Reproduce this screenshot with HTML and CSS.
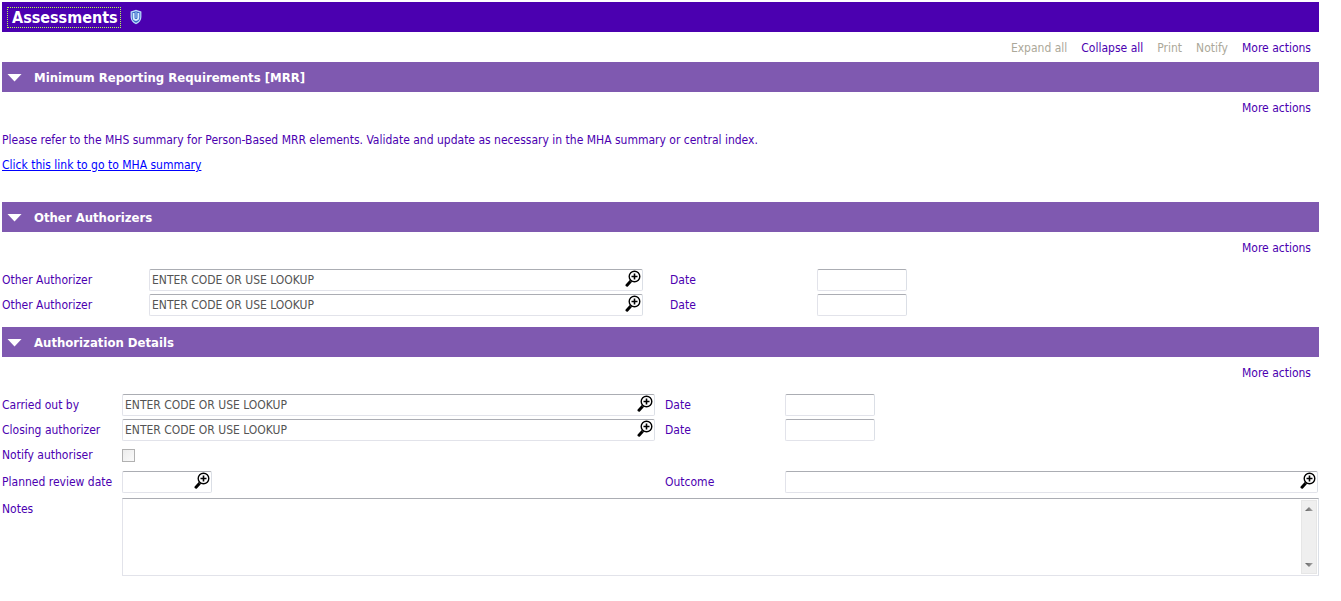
FILE: index.html
```html
<!DOCTYPE html>
<html lang="en">
<head>
<meta charset="utf-8">
<title>Assessments</title>
<link rel="stylesheet" href="styles.css">
</head>
<body>
<svg class="defs" aria-hidden="true">
  <symbol id="lookup" viewBox="0 0 16 18">
    <path d="M5.400 11.400 2 15.200" fill="none" stroke="#000" stroke-width="3" stroke-linecap="round"/>
    <path d="M6.600 9.800 5.400 11.200" fill="none" stroke="#888" stroke-width="1.600"/>
    <circle cx="9.500" cy="6.500" r="5.300" fill="#fff" stroke="#000" stroke-width="1.400"/>
    <path d="M6.500 6.500h6M9.500 3.500v6" fill="none" stroke="#000" stroke-width="1.600"/>
  </symbol>
</svg>
<header class="titlebar">
  <h1 class="title" tabindex="0">Assessments</h1>
  <svg class="shield" viewBox="0 0 12 16" aria-hidden="true">
    <path d="M6 .8 11.400 2.600V8c0 3.400-2 5.700-5.400 7.200C2.600 13.700.6 11.400.6 8V2.600z" fill="#b9dcfa"/>
    <path d="M6 2.200 10.200 3.500V8c0 2.800-1.500 4.500-4.200 5.800C3.300 12.500 1.800 10.800 1.800 8V3.500z" fill="#3a68c8"/>
    <path d="M3.600 4v4.600c0 3.200 4.800 3.200 4.800 0V4" fill="none" stroke="#d8efff" stroke-width="1.800"/>
    <path d="M6 3v6" stroke="#8fbcec" stroke-width="1.200"/>
  </svg>
</header>
<nav class="actions">
  <button type="button" disabled>Expand all</button>
  <button type="button">Collapse all</button>
  <button type="button" disabled>Print</button>
  <button type="button" disabled>Notify</button>
  <button type="button">More actions</button>
</nav>

<section>
  <h2 class="bar"><button type="button" class="toggle"><span class="arrow"></span>Minimum Reporting Requirements [MRR]</button></h2>
  <div class="actions"><button type="button">More actions</button></div>
  <div class="info">
    <p>Please refer to the MHS summary for Person-Based MRR elements. Validate and update as necessary in the MHA summary or central index.</p>
    <p><a href="#mha">Click this link to go to MHA summary</a></p>
  </div>
</section>

<section>
  <h2 class="bar"><button type="button" class="toggle"><span class="arrow"></span>Other Authorizers</button></h2>
  <div class="actions"><button type="button">More actions</button></div>
  <div class="fields others">
    <label for="oa1">Other Authorizer</label>
    <div class="box"><input id="oa1" type="text" value="ENTER CODE OR USE LOOKUP"><button type="button" class="find" aria-label="Look up"><svg><use href="#lookup"/></svg></button></div>
    <label class="second" for="od1">Date</label>
    <div class="box short"><input id="od1" type="text"></div>
    <label for="oa2">Other Authorizer</label>
    <div class="box"><input id="oa2" type="text" value="ENTER CODE OR USE LOOKUP"><button type="button" class="find" aria-label="Look up"><svg><use href="#lookup"/></svg></button></div>
    <label class="second" for="od2">Date</label>
    <div class="box short"><input id="od2" type="text"></div>
  </div>
</section>

<section>
  <h2 class="bar"><button type="button" class="toggle"><span class="arrow"></span>Authorization Details</button></h2>
  <div class="actions"><button type="button">More actions</button></div>
  <div class="fields details">
    <label for="by">Carried out by</label>
    <div class="box"><input id="by" type="text" value="ENTER CODE OR USE LOOKUP"><button type="button" class="find" aria-label="Look up"><svg><use href="#lookup"/></svg></button></div>
    <label class="second" for="d1">Date</label>
    <div class="box short"><input id="d1" type="text"></div>
    <label for="closing">Closing authorizer</label>
    <div class="box"><input id="closing" type="text" value="ENTER CODE OR USE LOOKUP"><button type="button" class="find" aria-label="Look up"><svg><use href="#lookup"/></svg></button></div>
    <label class="second" for="d2">Date</label>
    <div class="box short"><input id="d2" type="text"></div>
    <label for="notify">Notify authoriser</label>
    <input id="notify" class="check" type="checkbox">
    <label class="first" for="review">Planned review date</label>
    <div class="box short"><input id="review" type="text"><button type="button" class="find" aria-label="Look up"><svg><use href="#lookup"/></svg></button></div>
    <label class="second" for="outcome">Outcome</label>
    <div class="box"><input id="outcome" type="text"><button type="button" class="find" aria-label="Look up"><svg><use href="#lookup"/></svg></button></div>
  </div>
  <div class="notes">
    <label for="notes">Notes</label>
    <div class="notes-box">
      <textarea id="notes"></textarea>
      <div class="scroller">
        <button type="button" aria-label="Scroll up"><span class="up"></span></button>
        <button type="button" aria-label="Scroll down"><span class="down"></span></button>
      </div>
    </div>
  </div>
</section>
</body>
</html>
```
FILE: styles.css
```css
* { box-sizing: border-box; }

body {
  margin: 2px 22px 2px 2px;
  background: #fff;
  color: #4b00b0;
  font: 12px/16px "DejaVu Sans Condensed", "DejaVu Sans", sans-serif;
}

h1, h2, p { margin: 0; }

button, input, textarea { font: inherit; color: inherit; }

button {
  padding: 0;
  border: 0;
  background: none;
  cursor: pointer;
}

.defs { position: absolute; width: 0; height: 0; }

.titlebar {
  display: flex;
  align-items: center;
  gap: 9px;
  height: 30px;
  padding-left: 5px;
  background: #4b00b0;
}

.title {
  padding: 1px 2px 0 4px;
  border: 1px dotted #b4ff4f;
  color: #fff;
  font-size: 16px;
  line-height: 18px;
}

.shield { width: 12px; height: 16px; }

.actions {
  display: flex;
  justify-content: flex-end;
  align-items: center;
  gap: 14px;
  height: 30px;
  padding: 2px 8px 0 0;
}

.actions button:disabled { color: #aca899; cursor: default; }

.bar {
  height: 30px;
  background: #7f59b0;
  color: #fff;
  font-size: 13px;
}

.toggle {
  display: flex;
  align-items: center;
  gap: 12px;
  width: 100%;
  height: 100%;
  padding: 1px 0 0 5px;
}

.arrow {
  width: 15px;
  height: 8px;
  background: #fff;
  clip-path: polygon(0 0, 100% 0, 50% 100%);
}

.info { padding: 6px 0 24px; }
.info p { line-height: 25px; }
.info a { color: #00f; }

.fields {
  display: grid;
  align-items: center;
  grid-auto-rows: 25px;
}

.others {
  grid-template-columns: 147px minmax(0, 494fr) 174px minmax(0, 502fr);
  padding: 5px 0 10px;
}
.others .second { padding-left: 27px; }

.details {
  grid-template-columns: 120px minmax(0, 1fr) 130px minmax(0, 1fr);
  grid-template-rows: 25px 25px 25px 29px;
  padding: 5px 1px 0 0;
}
.details .second { padding-left: 10px; }
.details .first { grid-column: 1; }

.box {
  display: flex;
  align-items: center;
  height: 22px;
  margin-top: 1px;
  padding-right: 1px;
  border: 1px solid #e2e3ea;
  border-top-color: #abadb3;
  border-right-color: #dbdfe6;
  border-radius: 2px;
}
.short { width: 90px; }

.box input {
  flex: 1;
  min-width: 0;
  height: 20px;
  padding: 0 2px;
  border: 0;
  outline: 0;
  background: none;
  color: #545454;
}

.find { display: flex; padding-bottom: 2px; }
.find svg { width: 16px; height: 18px; }

.check {
  appearance: none;
  width: 13px;
  height: 13px;
  margin: 1px 0 0;
  border: 1px solid #b1b1b1;
  background: linear-gradient(135deg, #ececec, #fafafa);
}

.notes {
  display: grid;
  grid-template-columns: 120px minmax(0, 1fr);
  padding-top: 2px;
}
.notes label { padding-top: 3px; }

.notes-box {
  display: flex;
  height: 78px;
  padding: 1px;
  border: 1px solid #e2e3ea;
  border-top-color: #abadb3;
  border-right-color: #dbdfe6;
}

textarea {
  flex: 1;
  padding: 1px;
  border: 0;
  outline: 0;
  resize: none;
}

.scroller {
  display: flex;
  flex-direction: column;
  justify-content: space-between;
  width: 16px;
  border: 1px solid #e6e6e6;
  background: #efefef;
}

.scroller button {
  display: flex;
  align-items: center;
  justify-content: center;
  height: 16px;
}

.up, .down {
  width: 8px;
  height: 4px;
  background: linear-gradient(90deg, #606060, #a8a8a8);
}
.up { clip-path: polygon(50% 0, 100% 100%, 0 100%); }
.down { clip-path: polygon(0 0, 100% 0, 50% 100%); }
```
